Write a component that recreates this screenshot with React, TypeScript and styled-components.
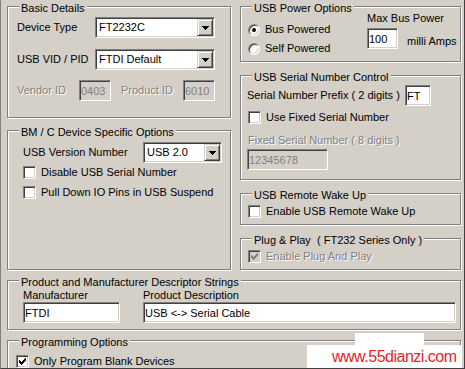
import styled, { createGlobalStyle } from 'styled-components';

const GlobalStyle = createGlobalStyle`
  html, body {
    margin: 0;
    padding: 0;
    background: #d4d0c8;
  }
`;

const Window = styled.div`
  position: relative;
  width: 465px;
  height: 369px;
  box-sizing: border-box;
  overflow: hidden;
  background: #d4d0c8;
  border-left: 1px solid #808080;
  border-right: 1px solid #404040;
  border-bottom: 1px solid #404040;
  padding: 0 3px 0 6px;
  font-family: 'Liberation Sans', Arial, sans-serif;
  font-size: 11px;
  line-height: 13px;
  color: #000;
`;

const Columns = styled.div`
  display: grid;
  grid-template-columns: 224px 221px;
  column-gap: 9px;
  margin-top: -2px;
`;

const Column = styled.div<{ $gap: number }>`
  display: flex;
  flex-direction: column;
  gap: ${(p) => p.$gap}px;
`;

// etched windows group box
const Group = styled.fieldset<{ $h: number; $mt?: number }>`
  margin: ${(p) => p.$mt ?? 0}px 0 0;
  padding: 0;
  min-width: 0;
  height: ${(p) => p.$h}px;
  box-sizing: border-box;
  border: 1px solid #808080;
  box-shadow: inset 1px 1px 0 #fff, 1px 1px 0 #fff;
`;

const Legend = styled.legend`
  margin-left: 11px;
  padding: 4px 2px 0;
  line-height: 13px;
  background: #d4d0c8;
  white-space: pre;
`;

const Body = styled.div<{ $pad: string }>`
  display: flex;
  flex-direction: column;
  padding: ${(p) => p.$pad};
`;

const Row = styled.div<{ $mt?: number; $ml?: number }>`
  display: flex;
  align-items: center;
  margin-top: ${(p) => p.$mt ?? 0}px;
  margin-left: ${(p) => p.$ml ?? 0}px;
`;

const Label = styled.span<{ $w?: number; $disabled?: boolean; $ml?: number }>`
  flex: none;
  width: ${(p) => (p.$w ? `${p.$w}px` : 'auto')};
  margin-left: ${(p) => p.$ml ?? 0}px;
  white-space: nowrap;
  color: ${(p) => (p.$disabled ? '#808080' : '#000')};
  text-shadow: ${(p) => (p.$disabled ? '1px 1px 0 #fff' : 'none')};
`;

const sunken = `
  border-style: solid;
  border-width: 1px;
  border-color: #808080 #fff #fff #808080;
  box-shadow: inset 1px 1px 0 #404040, inset -1px -1px 0 #d4d0c8;
`;

const Combo = styled.div<{ $w: number }>`
  ${sunken}
  display: flex;
  align-items: center;
  flex: none;
  box-sizing: border-box;
  width: ${(p) => p.$w}px;
  height: 21px;
  padding: 1px 1px 1px 3px;
  background: #fff;
`;

const ComboText = styled.span`
  flex: 1;
  white-space: nowrap;
`;

const ComboButton = styled.div`
  display: flex;
  align-items: center;
  justify-content: center;
  flex: none;
  box-sizing: border-box;
  width: 16px;
  height: 17px;
  background: #d4d0c8;
  border-style: solid;
  border-width: 1px;
  border-color: #d4d0c8 #404040 #404040 #d4d0c8;
  box-shadow: inset 1px 1px 0 #fff, inset -1px -1px 0 #808080;
`;

const Edit = styled.input<{ $w: number }>`
  ${sunken}
  flex: none;
  box-sizing: border-box;
  width: ${(p) => p.$w}px;
  height: 21px;
  margin: 0;
  padding: 0 0 0 1px;
  font: inherit;
  color: #000;
  background: #fff;
  outline: none;

  &:disabled {
    color: #808080;
    background: #d4d0c8;
  }
`;

const Option = styled.label<{ $disabled?: boolean; $mt?: number; $ml?: number }>`
  display: flex;
  align-items: center;
  gap: 5px;
  height: 13px;
  margin-top: ${(p) => p.$mt ?? 0}px;
  margin-left: ${(p) => p.$ml ?? 0}px;
  white-space: nowrap;
  color: ${(p) => (p.$disabled ? '#808080' : '#000')};
  text-shadow: ${(p) => (p.$disabled ? '1px 1px 0 #fff' : 'none')};
`;

const CheckBox = styled.span<{ $disabled?: boolean }>`
  ${sunken}
  display: flex;
  align-items: center;
  justify-content: center;
  flex: none;
  box-sizing: border-box;
  width: 13px;
  height: 13px;
  background: ${(p) => (p.$disabled ? '#d4d0c8' : '#fff')};
  color: ${(p) => (p.$disabled ? '#808080' : '#000')};
  text-shadow: none;
`;

const RadioCircle = styled.span`
  ${sunken}
  display: flex;
  align-items: center;
  justify-content: center;
  flex: none;
  box-sizing: border-box;
  width: 12px;
  height: 12px;
  border-radius: 50%;
  background: #fff;
`;

const RadioDot = styled.span`
  width: 4px;
  height: 4px;
  border-radius: 50%;
  background: #000;
`;

const PowerBody = styled.div`
  display: flex;
  padding-left: 7px;
`;

const RadioColumn = styled.div`
  display: flex;
  flex-direction: column;
  gap: 6px;
  width: 119px;
  padding-top: 8px;
`;

const MaxPower = styled.div`
  display: flex;
  flex-direction: column;
  margin-top: -3px;
`;

const PowerRow = styled.div`
  display: flex;
  align-items: flex-start;
  margin-top: 3px;
`;

const Unit = styled.span`
  margin: 7px 0 0 9px;
  white-space: nowrap;
`;

const Descriptors = styled.div`
  display: flex;
  gap: 23px;
  padding-left: 15px;
`;

const DescColumn = styled.div`
  display: flex;
  flex-direction: column;
`;

const Stamp = styled.div`
  position: absolute;
  left: 306px;
  top: 333px;
  width: 154px;
`;

const StampTab = styled.div`
  width: 69px;
  height: 12px;
  margin-left: 48px;
  background: #fff;
`;

const StampText = styled.div`
  height: 23px;
  padding-left: 25px;
  background: #fff;
  color: #e8232b;
  font-size: 16px;
  line-height: 23px;
  letter-spacing: -0.5px;
  white-space: nowrap;
`;

function Arrow() {
  return (
    <svg width="7" height="4" viewBox="0 0 7 4" shapeRendering="crispEdges">
      <path d="M0 0h7v1H0zM1 1h5v1H1zM2 2h3v1H2zM3 3h1v1H3z" fill="#000" />
    </svg>
  );
}

function Tick() {
  return (
    <svg width="7" height="7" viewBox="0 0 7 7" shapeRendering="crispEdges">
      <path
        d="M6 0h1v1H6zM5 1h2v1H5zM0 2h1v1H0zM4 2h3v1H4zM0 3h2v1H0zM3 3h3v1H3zM0 4h5v1H0zM1 5h3v1H1zM2 6h1v1H2z"
        fill="currentColor"
      />
    </svg>
  );
}

function Dropdown({ w, value }: { w: number; value: string }) {
  return (
    <Combo $w={w}>
      <ComboText>{value}</ComboText>
      <ComboButton>
        <Arrow />
      </ComboButton>
    </Combo>
  );
}

function Check({
  label,
  checked,
  disabled,
  mt,
  ml,
}: {
  label: string;
  checked?: boolean;
  disabled?: boolean;
  mt?: number;
  ml?: number;
}) {
  return (
    <Option $disabled={disabled} $mt={mt} $ml={ml}>
      <CheckBox $disabled={disabled}>{checked && <Tick />}</CheckBox>
      {label}
    </Option>
  );
}

function Radio({ label, checked }: { label: string; checked?: boolean }) {
  return (
    <Option>
      <RadioCircle>{checked && <RadioDot />}</RadioCircle>
      {label}
    </Option>
  );
}

export default function App() {
  return (
    <Window>
      <GlobalStyle />
      <Columns>
        <Column $gap={4}>
          <Group $h={120}>
            <Legend>Basic Details</Legend>
            <Body $pad="2px 0 0 9px">
              <Row>
                <Label $w={78}>Device Type</Label>
                <Dropdown w={120} value="FT2232C" />
              </Row>
              <Row $mt={11}>
                <Label $w={78}>USB VID / PID</Label>
                <Dropdown w={120} value="FTDI Default" />
              </Row>
              <Row $mt={10}>
                <Label $w={62} $disabled>
                  Vendor ID
                </Label>
                <Edit $w={32} defaultValue="0403" disabled />
                <Label $w={62} $ml={10} $disabled>
                  Product ID
                </Label>
                <Edit $w={32} defaultValue="6010" disabled />
              </Row>
            </Body>
          </Group>
          <Group $h={148}>
            <Legend>BM / C Device Specific Options</Legend>
            <Body $pad="3px 0 0 15px">
              <Row>
                <Label $w={120}>USB Version Number</Label>
                <Dropdown w={79} value="USB 2.0" />
              </Row>
              <Check label="Disable USB Serial Number" mt={3} />
              <Check label="Pull Down IO Pins in USB Suspend" mt={7} />
            </Body>
          </Group>
        </Column>
        <Column $gap={5}>
          <Group $h={64}>
            <Legend>USB Power Options</Legend>
            <PowerBody>
              <RadioColumn>
                <Radio label="Bus Powered" checked />
                <Radio label="Self Powered" />
              </RadioColumn>
              <MaxPower>
                <Label>Max Bus Power</Label>
                <PowerRow>
                  <Edit $w={31} defaultValue="100" readOnly />
                  <Unit>milli Amps</Unit>
                </PowerRow>
              </MaxPower>
            </PowerBody>
          </Group>
          <Group $h={113}>
            <Legend>USB Serial Number Control</Legend>
            <Body $pad="1px 0 0 6px">
              <Row>
                <Label $w={158}>Serial Number Prefix ( 2 digits )</Label>
                <Edit $w={26} defaultValue="FT" readOnly />
              </Row>
              <Check label="Use Fixed Serial Number" mt={5} ml={1} />
              <Row $mt={10} $ml={1}>
                <Label $disabled>Fixed Serial Number ( 8 digits )</Label>
              </Row>
              <Row $mt={2}>
                <Edit $w={81} defaultValue="12345678" disabled />
              </Row>
            </Body>
          </Group>
          <Group $h={40}>
            <Legend>USB Remote Wake Up</Legend>
            <Body $pad="3px 0 0 7px">
              <Check label="Enable USB Remote Wake Up" />
            </Body>
          </Group>
          <Group $h={40}>
            <Legend>Plug &amp; Play  ( FT232 Series Only )</Legend>
            <Body $pad="3px 0 0 7px">
              <Check label="Enable Plug And Play" checked disabled />
            </Body>
          </Group>
        </Column>
      </Columns>
      <Group $h={58} $mt={2}>
        <Legend>Product and Manufacturer Descriptor Strings</Legend>
        <Descriptors>
          <DescColumn>
            <Label>Manufacturer</Label>
            <Edit $w={97} defaultValue="FTDI" readOnly />
          </DescColumn>
          <DescColumn>
            <Label>Product Description</Label>
            <Edit $w={313} defaultValue="USB <-> Serial Cable" readOnly />
          </DescColumn>
        </Descriptors>
      </Group>
      <Group $h={50} $mt={2}>
        <Legend>Programming Options</Legend>
        <Body $pad="6px 0 0 8px">
          <Check label="Only Program Blank Devices" checked />
        </Body>
      </Group>
      <Stamp>
        <StampTab />
        <StampText>www.55dianzi.com</StampText>
      </Stamp>
    </Window>
  );
}
